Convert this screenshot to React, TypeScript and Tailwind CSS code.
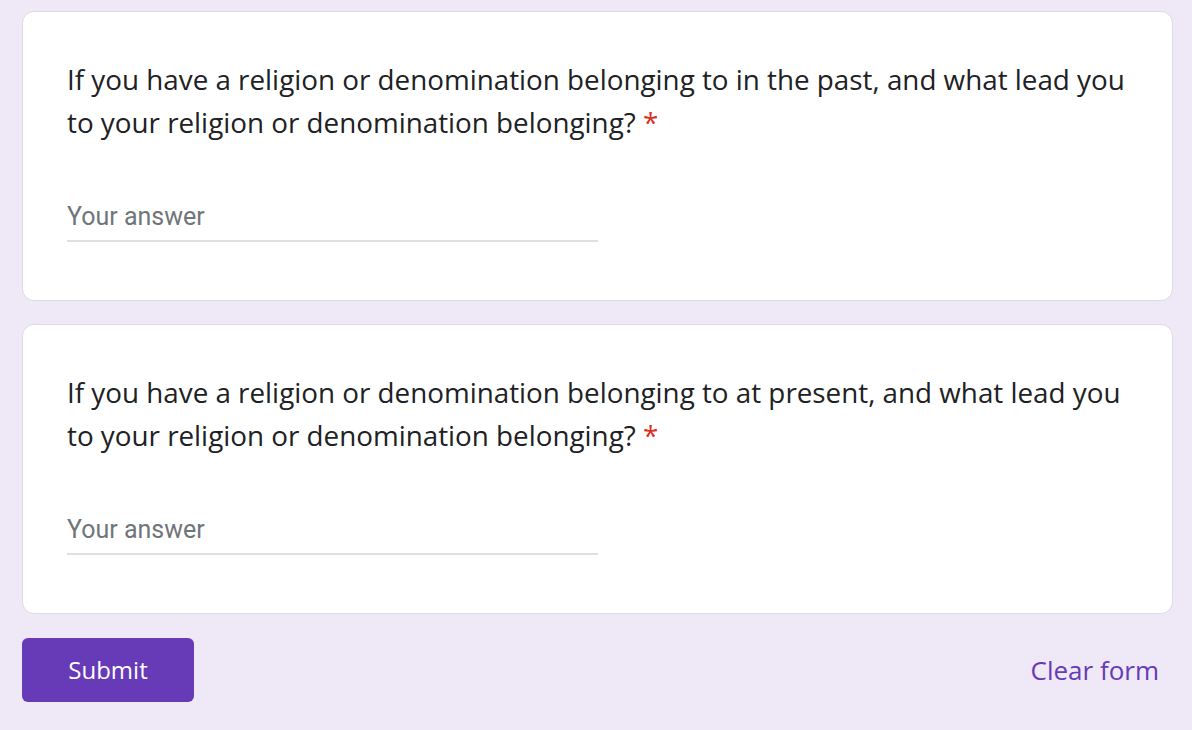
import React from "react";

const questions = [
  "If you have a religion or denomination belonging to in the past, and what lead you to your religion or denomination belonging?",
  "If you have a religion or denomination belonging to at present, and what lead you to your religion or denomination belonging?",
];

function QuestionCard({ title }: { title: string }) {
  return (
    <div className="rounded-[12px] border border-[#dadce0] bg-white pl-[44px] pr-[24px] pt-[46px] pb-[58px]">
      <p
        className="text-[27.8px] leading-[43px] text-[#202124]"
        style={{ fontFamily: '"Open Sans", sans-serif' }}
      >
        {title} <span className="text-[#d93025]">*</span>
      </p>
      <div className="mt-[58px] w-[531px] border-b-2 border-[#e0e0e0] pb-[8px]">
        <span
          className="block text-[25px] leading-[30px] text-[#70757a]"
          style={{ fontFamily: "Roboto, sans-serif" }}
        >
          Your answer
        </span>
      </div>
    </div>
  );
}

export default function App() {
  return (
    <div className="min-h-[730px] w-full bg-[#eee8f7] px-[22px] pt-[11px]" style={{ fontFamily: '"Open Sans", sans-serif' }}>
      <div className="flex w-[1151px] flex-col gap-[23px]">
        {questions.map((q) => (
          <QuestionCard key={q} title={q} />
        ))}
      </div>
      <div className="mt-[24px] flex w-[1151px] items-center justify-between">
        <button className="h-[64px] w-[172px] rounded-[6px] bg-[#673ab7] text-[24px] font-medium text-white">
          Submit
        </button>
        <button className="mr-[14px] text-[26px] font-medium text-[#673ab7]">Clear form</button>
      </div>
    </div>
  );
}
